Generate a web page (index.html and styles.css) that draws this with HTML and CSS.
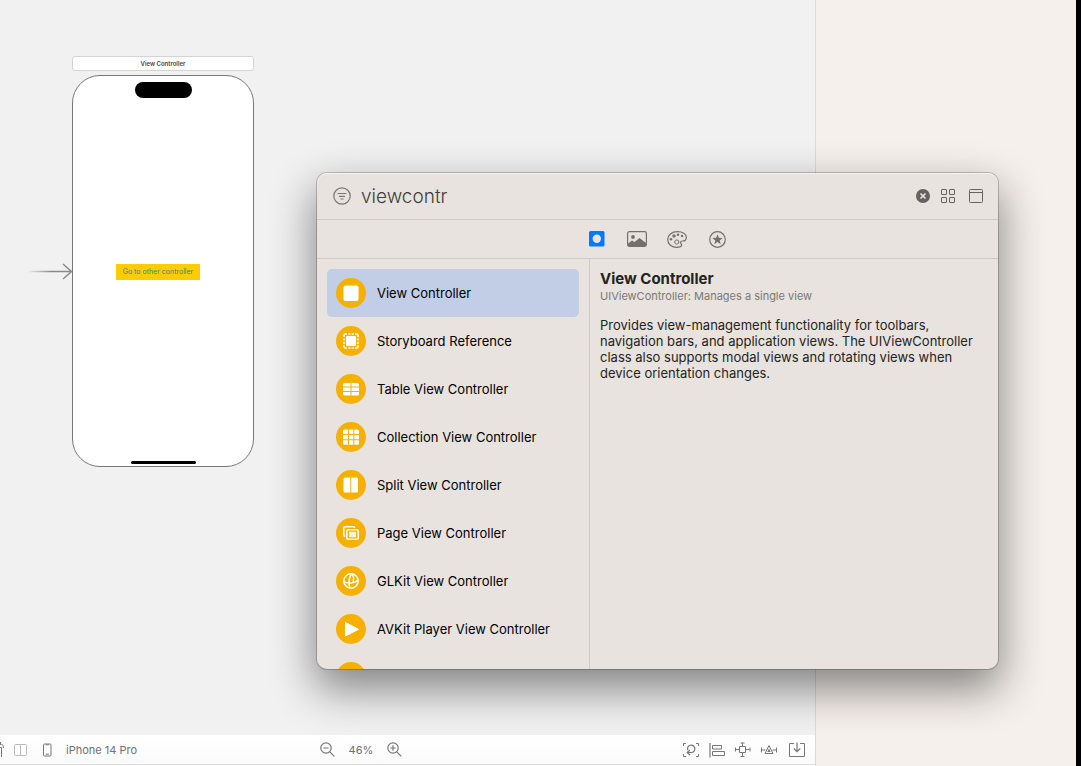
FILE: index.html
```
<!DOCTYPE html>
<html lang="en">
<head>
<meta charset="utf-8">
<title>Storyboard</title>
<link rel="stylesheet" href="styles.css">
</head>
<body>
<div class="workspace">
  <main class="editor">
    <div class="canvas">
      <svg class="entry-arrow" viewBox="0 0 46 18" fill="none">
        <defs><linearGradient id="fade" gradientUnits="userSpaceOnUse" x1="0" y1="0" x2="24" y2="0"><stop offset="0" stop-color="#8a8a8a" stop-opacity="0"/><stop offset="1" stop-color="#8a8a8a"/></linearGradient></defs>
        <path d="M0 8.800h44v1.500H0z" fill="url(#fade)"/>
        <path d="M36 2l8.500 7.500-8.500 7.500" stroke="#8a8a8a" stroke-width="1.500"/>
      </svg>
      <section class="scene">
        <div class="scene-title">View Controller</div>
        <div class="phone">
          <div class="island"></div>
          <button class="go">Go to other controller</button>
          <div class="home-bar"></div>
        </div>
      </section>
    </div>
    <footer class="bar">
      <div class="bar-left">
        <button class="icon" aria-label="Outline"><svg width="4" height="16" viewBox="0 0 4 16" fill="none" stroke="#777"><path d="M0 2.500Q3.500 1.500 3.500 6M0 5.500h1.500V15M0.500 0v2"/></svg></button>
        <button class="icon" aria-label="Split"><svg width="14" height="14" viewBox="0 0 14 14" fill="none" stroke="#bbb"><rect x=".5" y="1.500" width="12" height="11" rx="1"/><path d="M6.500 1.500v11"/></svg></button>
        <button class="device"><svg width="9" height="14" viewBox="0 0 9 14" fill="none" stroke="#777"><rect x=".5" y="1" width="7.500" height="12" rx="1"/><path d="M2.800 1.800h3M2.800 11.200h3"/></svg><span>iPhone 14 Pro</span></button>
      </div>
      <div class="bar-zoom">
        <button class="icon" aria-label="Zoom out"><svg width="15" height="15" viewBox="0 0 15 15" fill="none" stroke="#777" stroke-width="1.200"><circle cx="6" cy="6" r="5.200"/><path d="M9.800 9.800l4.500 4.500M3.300 6h5.400"/></svg></button>
        <button class="percent">46%</button>
        <button class="icon" aria-label="Zoom in"><svg width="15" height="15" viewBox="0 0 15 15" fill="none" stroke="#777" stroke-width="1.200"><circle cx="6" cy="6" r="5.200"/><path d="M9.800 9.800l4.500 4.500M3.300 6h5.400M6 3.300v5.400"/></svg></button>
      </div>
      <div class="bar-right">
        <button class="icon" aria-label="Update frames"><svg width="16" height="16" viewBox="0 0 16 16" fill="none" stroke="#777"><path d="M.5 4V1.500H3M13 1.500h2.500V4M15.500 12v2.500H13M3 14.500H.5V12"/><path d="M4.800 8.300A3.700 3.700 0 1 1 8.500 10.500H4.500M7 8l-2.800 2.500L7 13" stroke-width="1.200"/></svg></button>
        <button class="icon" aria-label="Align"><svg width="16" height="16" viewBox="0 0 16 16" fill="none" stroke="#777"><path d="M1 1v14.500" stroke-width="1.200"/><path d="M3.500 3.500h9v3.500h-9zM3.500 9.500h12v4h-12z"/></svg></button>
        <button class="icon" aria-label="Add constraints"><svg width="16" height="16" viewBox="0 0 16 16" fill="none" stroke="#777"><path d="M4.500 4.500h6v6h-6zM7.500 1v3.500M5.500 1h4M7.500 10.500V14M5.500 14.500h4M.5 7.500h4M.5 5.500v4M10.500 7.500h4M15 5.500v4"/></svg></button>
        <button class="icon" aria-label="Resolve issues"><svg width="16" height="16" viewBox="0 0 16 16" fill="none" stroke="#777"><path d="M8 3.500l4 8H4zM.5 8h4M.5 5.500v5M11.500 8h4M15.500 5.500v5"/><path d="M8 6.500l1.700 3.500H6.300z" fill="#777" stroke="none"/></svg></button>
        <button class="icon" aria-label="Embed in"><svg width="16" height="16" viewBox="0 0 16 16" fill="none" stroke="#777"><path d="M5 1.500H.5v13h15v-13H11"/><path d="M8 .5v9M4.800 6.500L8 9.700l3.200-3.200" stroke-width="1.200"/></svg></button>
      </div>
    </footer>
  </main>
  <aside class="inspector"></aside>
</div>

<div class="library" role="dialog" aria-label="Library">
  <header class="search">
    <svg width="18" height="18" viewBox="0 0 18 18" fill="none" stroke="#7c7774" stroke-width="1.200"><circle cx="9" cy="9" r="8.200"/><path d="M4.500 6.500h9M6 9.300h6M7.500 12h3"/></svg>
    <input class="query" type="text" value="viewcontr" aria-label="Search library">
    <div class="search-actions">
      <button class="icon" aria-label="Clear"><svg width="14" height="14" viewBox="0 0 14 14"><circle cx="7" cy="7" r="7" fill="#66615e"/><path d="M4.500 4.500l5 5M9.500 4.500l-5 5" stroke="#e8e3df" stroke-width="1.700"/></svg></button>
      <button class="icon" aria-label="Grid view"><svg width="14" height="14" viewBox="0 0 14 14" fill="none" stroke="#66615e"><rect x=".5" y=".5" width="5" height="5" rx=".5"/><rect x="8.500" y=".5" width="5" height="5" rx=".5"/><rect x=".5" y="8.500" width="5" height="5" rx=".5"/><rect x="8.500" y="8.500" width="5" height="5" rx=".5"/></svg></button>
      <button class="icon" aria-label="Details"><svg width="14" height="14" viewBox="0 0 14 14" fill="none" stroke="#66615e"><rect x=".5" y=".5" width="13" height="13" rx="1"/><path d="M.5 3.500h13"/></svg></button>
    </div>
  </header>
  <nav class="tabs">
    <button class="icon tab" aria-label="Objects"><svg width="16" height="16" viewBox="0 0 16 16"><rect width="15.500" height="15.500" rx="1.500" fill="#007aff"/><circle cx="7.800" cy="7.800" r="4.200" fill="#e8e3df"/></svg></button>
    <button class="icon tab" aria-label="Media"><svg width="20" height="16" viewBox="0 0 20 16"><rect x=".6" y=".6" width="18.800" height="14.800" rx="1.800" fill="none" stroke="#74706d" stroke-width="1.200"/><circle cx="6" cy="6" r="1.900" fill="#74706d"/><path d="M1 12.500l4-3 2.500 1.500L12.500 7 19 12v3H1z" fill="#74706d"/></svg></button>
    <button class="icon tab" aria-label="Colors"><svg width="20" height="17" viewBox="0 0 20 17"><path d="M10.500 .7C4.500 .7.700 4.200.700 8.600c0 4.300 3.600 7.700 8.400 7.700 3.200 0 5.600-.8 5.600-2.300 0-1-1.200-1.300-1.200-2.500 0-1 .8-1.500 1.900-1.500 2 0 3.900-.8 3.900-3.600 0-3.400-3.700-5.700-8.800-5.700z" fill="none" stroke="#74706d" stroke-width="1.200"/><g fill="#74706d"><circle cx="4" cy="8.300" r="1.300"/><circle cx="7" cy="5" r="1.700"/><circle cx="11" cy="3.700" r="1.300"/><circle cx="15" cy="5" r="1.200"/></g><circle cx="9.800" cy="11" r="2.100" fill="none" stroke="#74706d"/></svg></button>
    <button class="icon tab" aria-label="Favorites"><svg width="17" height="17" viewBox="0 0 17 17"><circle cx="8.500" cy="8.500" r="7.800" fill="none" stroke="#74706d" stroke-width="1.200"/><path d="M8.500 3.200l1.350 3.650 3.900.15-3.050 2.400 1.050 3.750L8.500 11l-3.250 2.150L6.300 9.400 3.250 7l3.900-.15z" fill="#74706d"/></svg></button>
  </nav>
  <div class="body">
    <div class="list">
      <button class="item selected"><span class="badge"><svg viewBox="0 0 30 30"><rect x="7.500" y="7.500" width="15" height="15.500" rx="2" fill="#fff"/></svg></span>View Controller</button>
      <button class="item"><span class="badge"><svg viewBox="0 0 30 30"><rect x="10" y="10" width="10" height="10" rx="1" fill="#fff"/><path d="M11 8H9.500Q8 8 8 9.500V11M12.300 8h2.200M15.700 8h2.200M19 8h1.500Q22 8 22 9.500V11M22 12.300v2.200M22 15.700v2.200M22 19v1.500Q22 22 20.500 22H19M17.900 22h-2.200M14.500 22h-2.200M11 22H9.500Q8 22 8 20.500V19M8 17.900v-2.200M8 14.500v-2.200" fill="none" stroke="#fff" stroke-width="1.500"/></svg></span>Storyboard Reference</button>
      <button class="item"><span class="badge"><svg viewBox="0 0 30 30" fill="#fff"><path d="M8.500 9H14.500v3.500H7v-2Q7 9 8.500 9zM15.500 9H21.500q1.500 0 1.500 1.500v2H15.500zM7 13.500h7.500v3.500H7zM15.500 13.500H23v3.500H15.500zM7 18h7.500v3.500h-6Q7 21.500 7 20zM15.500 18H23v2q0 1.500-1.500 1.500h-6z"/></svg></span>Table View Controller</button>
      <button class="item"><span class="badge"><svg viewBox="0 0 30 30" fill="#fff"><path d="M8.500 7.500H12V12H7V9Q7 7.500 8.500 7.500zM13 7.500h4.300V12H13zM18.300 7.500H21.500Q23 7.500 23 9v3h-4.700zM7 13h5v4.300H7zM13 13h4.300v4.300H13zM18.300 13H23v4.300h-4.700zM7 18.300h5v4.400H8.500Q7 22.700 7 21.200zM13 18.300h4.300v4.400H13zM18.300 18.300H23v2.900q0 1.500-1.500 1.500h-3.200z"/></svg></span>Collection View Controller</button>
      <button class="item"><span class="badge"><svg viewBox="0 0 30 30" fill="#fff"><path d="M9 7.500h5.300v15H9q-1.500 0-1.500-1.500V9Q7.500 7.500 9 7.500zM15.300 7.500H20.500q1.500 0 1.500 1.500v12q0 1.500-1.500 1.500h-5.200z"/></svg></span>Split View Controller</button>
      <button class="item"><span class="badge"><svg viewBox="0 0 30 30" fill="none" stroke="#fff" stroke-width="1.500"><path d="M9.500 18.200H9q-1.200 0-1.200-1.200V10Q7.800 8.800 9 8.800h8.500q1.200 0 1.200 1.200"/><rect x="10.800" y="11.800" width="11.400" height="9.400" rx="1.200"/><path d="M13 13.800h7v5.400h-7z" fill="#fff" fill-opacity=".85" stroke="none"/></svg></span>Page View Controller</button>
      <button class="item"><span class="badge"><svg viewBox="0 0 30 30" fill="none" stroke="#fff" stroke-width="1.500"><circle cx="15" cy="15" r="7.200"/><path d="M16 7.800C12.500 11 12.500 18.500 14 22.200M7.800 15.500C11 18 19 17.500 22.200 14M16 7.800Q18.500 11.500 17 16.500"/></svg></span>GLKit View Controller</button>
      <button class="item"><span class="badge"><svg viewBox="0 0 30 30"><path d="M9.500 8.500L22.500 15.300 9.500 22z" fill="#fff" stroke="#fff" stroke-linejoin="round"/></svg></span>AVKit Player View Controller</button>
      <button class="item" aria-label="More"><span class="badge"></span></button>
    </div>
    <article class="detail">
      <h1>View Controller</h1>
      <p class="sub">UIViewController: Manages a single view</p>
      <p class="desc">Provides view-management functionality for toolbars, navigation bars, and application views. The UIViewController class also supports modal views and rotating views when device orientation changes.</p>
    </article>
  </div>
</div>
</body>
</html>
```
FILE: styles.css
```
* { box-sizing: border-box; }
html, body { height: 100%; }
body {
  margin: 0;
  position: relative;
  overflow: hidden;
  background: #fff;
  font-family: Inter, "Liberation Sans", sans-serif;
  font-size: 13px;
  color: #000;
}
button, input { font: inherit; color: inherit; border: 0; padding: 0; margin: 0; background: none; outline: 0; }
svg { display: block; flex: none; }

.workspace { display: flex; height: 100%; }
.editor { flex: 1; display: flex; flex-direction: column; min-width: 0; border-right: 1px solid #dcd9d6; }
.inspector { width: 265px; background: #f5f0eb; border-right: 5px solid #000; }

.canvas { flex: 1; position: relative; background: #f1f1f1; }
.entry-arrow { position: absolute; left: 27px; top: 262px; width: 46px; height: 18px; }
.scene { position: absolute; left: 72px; top: 56px; width: 182px; }
.scene-title {
  height: 15px;
  margin-bottom: 4px;
  border: 1px solid #d4d4d4;
  border-radius: 3px;
  background: #fff;
  color: #444;
  font-size: 6px;
  font-weight: 600;
  line-height: 13px;
  text-align: center;
}
.phone {
  display: flex;
  flex-direction: column;
  align-items: center;
  justify-content: space-between;
  height: 392px;
  padding: 6px 0 2px;
  border: 1px solid #777;
  border-radius: 28px;
  background: #fff;
}
.island { width: 57px; height: 16px; border-radius: 8px; background: #000; }
.go { height: 16px; margin: 0 10px 16px 0; padding: 0 7px; background: #fc0; color: #3d8590; font-size: 7px; line-height: 16px; white-space: nowrap; }
.home-bar { width: 65px; height: 3px; border-radius: 2px; background: #000; }

.bar {
  display: flex;
  align-items: center;
  height: 31px;
  padding: 0 10px 1px 0;
  border-bottom: 1px solid #fff;
  background: linear-gradient(#fff, #fafafa);
  box-shadow: inset 0 -1px #dcdcdc;
  color: #707070;
  font-size: 11px;
}
.bar-left { display: flex; align-items: center; gap: 10px; width: 39.7%; }
.device { display: flex; align-items: center; gap: 14px; margin-left: 5px; }
.bar-zoom { display: flex; align-items: center; gap: 14px; }
.bar-right { display: flex; align-items: center; gap: 10px; margin-left: auto; }
.bar-right .icon:last-child { margin-left: 2px; }

.library {
  position: absolute;
  left: 317px;
  right: 83px;
  top: 173px;
  bottom: 97px;
  display: flex;
  flex-direction: column;
  overflow: hidden;
  border-radius: 10px;
  background: #e8e3df;
  box-shadow: inset 0 1px #f6f3f1, 0 0 0 1px rgba(0, 0, 0, .2), 0 18px 44px 2px rgba(0, 0, 0, .46);
}
.search { display: flex; align-items: center; gap: 10px; height: 47px; padding: 0 15px 0 16px; border-bottom: 1px solid #cfcac7; }
.query { flex: 1; min-width: 0; height: 30px; color: #403c39; font-size: 19px; font-weight: 300; }
.search-actions { display: flex; align-items: center; gap: 14px; }
.search-actions .icon:first-child { margin-right: -3px; }
.tabs { display: flex; justify-content: center; align-items: center; height: 39px; padding-right: 1px; border-bottom: 1px solid #cfcac7; }
.tab { display: flex; justify-content: center; width: 40px; }

.body { flex: 1; display: flex; min-height: 0; }
.list { flex: 0 0 273px; padding: 10px; overflow: hidden; border-right: 1px solid #cfcac7; }
.item { display: flex; align-items: center; gap: 11px; width: 100%; height: 48px; padding: 0 9px; border-radius: 5px; text-align: left; white-space: nowrap; }
.selected { background: #c2cde6; }
.badge { flex: none; width: 30px; height: 30px; border-radius: 50%; background: #f5b000; }

.detail { flex: 1; padding: 10px; color: #242321; }
.detail h1 { margin: 0; font-size: 15px; font-weight: 700; line-height: 20px; }
.detail p { margin: 0; }
.detail .sub { color: #7c7875; font-size: 11px; line-height: 14px; }
.detail .desc { margin-top: 14px; line-height: 16px; }
```
